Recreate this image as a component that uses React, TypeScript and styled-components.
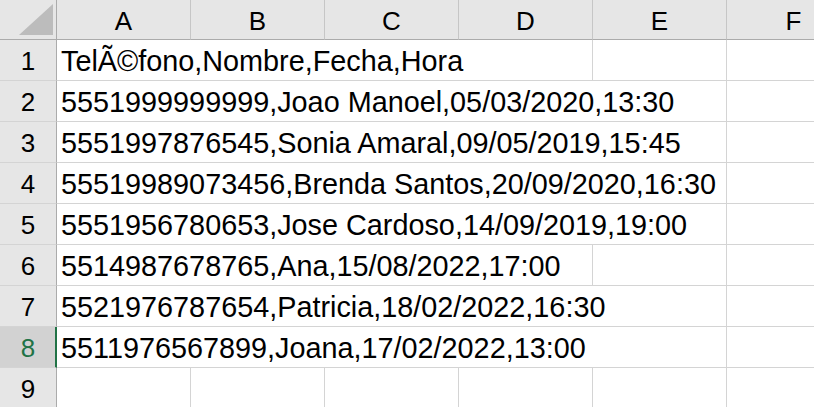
import React from "react";
import styled, { createGlobalStyle, css } from "styled-components";

const GlobalStyle = createGlobalStyle`
  html, body {
    margin: 0;
    padding: 0;
    background: #ffffff;
    overflow: hidden;
  }
  body {
    font-family: "Liberation Sans", Arial, sans-serif;
  }
`;

const ROW_HEADER_W = 57;
const COL_W = 134;
const COLS = ["A", "B", "C", "D", "E", "F"];

const Sheet = styled.div`
  display: grid;
  grid-template-columns: ${ROW_HEADER_W}px repeat(${COLS.length}, ${COL_W}px);
  grid-template-rows: 40px;
  grid-auto-rows: 41px;
  width: 814px;
  overflow: hidden;
  background: #ffffff;
`;

const Corner = styled.div`
  background: #e6e6e6;
  border-right: 1px solid #ababab;
  border-bottom: 1px solid #ababab;
  display: flex;
  align-items: flex-end;
  justify-content: flex-end;
  padding: 0 3px 4px 0;
  box-sizing: border-box;
`;

const ColHeader = styled.div`
  background: #e6e6e6;
  border-right: 1px solid #c6c6c6;
  border-bottom: 1px solid #ababab;
  box-sizing: border-box;
  display: flex;
  align-items: center;
  justify-content: center;
  padding-top: 3px;
  font-size: 26px;
  color: #000;
`;

const RowHeader = styled.div<{ $selected?: boolean }>`
  background: #e6e6e6;
  border-right: 1px solid #ababab;
  border-bottom: 1px solid #d4d4d4;
  box-sizing: border-box;
  display: flex;
  align-items: center;
  justify-content: center;
  padding-top: 2px;
  font-size: 26px;
  color: #000;
  ${(p) =>
    p.$selected &&
    css`
      background: #d2d2d2;
      color: #217346;
      border-right: 2px solid #217346;
      padding-left: 1px;
    `}
`;

const Cell = styled.div<{ $span?: number }>`
  grid-column: span ${(p) => p.$span ?? 1};
  border-right: 1px solid #d4d4d4;
  border-bottom: 1px solid #d4d4d4;
  box-sizing: border-box;
  display: flex;
  align-items: center;
  padding: 2px 0 0 4px;
  font-size: 28.8px;
  color: #000;
  white-space: nowrap;
  overflow: hidden;
`;

const rows: { text: string; span: number }[] = [
  { text: "TelÃ©fono,Nombre,Fecha,Hora", span: 4 },
  { text: "5551999999999,Joao Manoel,05/03/2020,13:30", span: 5 },
  { text: "5551997876545,Sonia Amaral,09/05/2019,15:45", span: 5 },
  { text: "55519989073456,Brenda Santos,20/09/2020,16:30", span: 5 },
  { text: "5551956780653,Jose Cardoso,14/09/2019,19:00", span: 5 },
  { text: "5514987678765,Ana,15/08/2022,17:00", span: 4 },
  { text: "5521976787654,Patricia,18/02/2022,16:30", span: 5 },
  { text: "5511976567899,Joana,17/02/2022,13:00", span: 5 },
  { text: "", span: 1 },
];

const CornerMark = () => (
  <svg width="34" height="31" viewBox="0 0 34 31">
    <polygon points="0,31 34,31 34,0" fill="#bcbcbc" />
  </svg>
);

export default function App() {
  return (
    <>
      <GlobalStyle />
      <Sheet>
        <Corner>
          <CornerMark />
        </Corner>
        {COLS.map((c) => (
          <ColHeader key={c}>{c}</ColHeader>
        ))}
        {rows.map((r, i) => (
          <React.Fragment key={i}>
            <RowHeader $selected={i === 7}>{i + 1}</RowHeader>
            <Cell $span={r.span}>{r.text}</Cell>
            {Array.from({ length: COLS.length - r.span }).map((_, j) => (
              <Cell key={j} />
            ))}
          </React.Fragment>
        ))}
      </Sheet>
    </>
  );
}
